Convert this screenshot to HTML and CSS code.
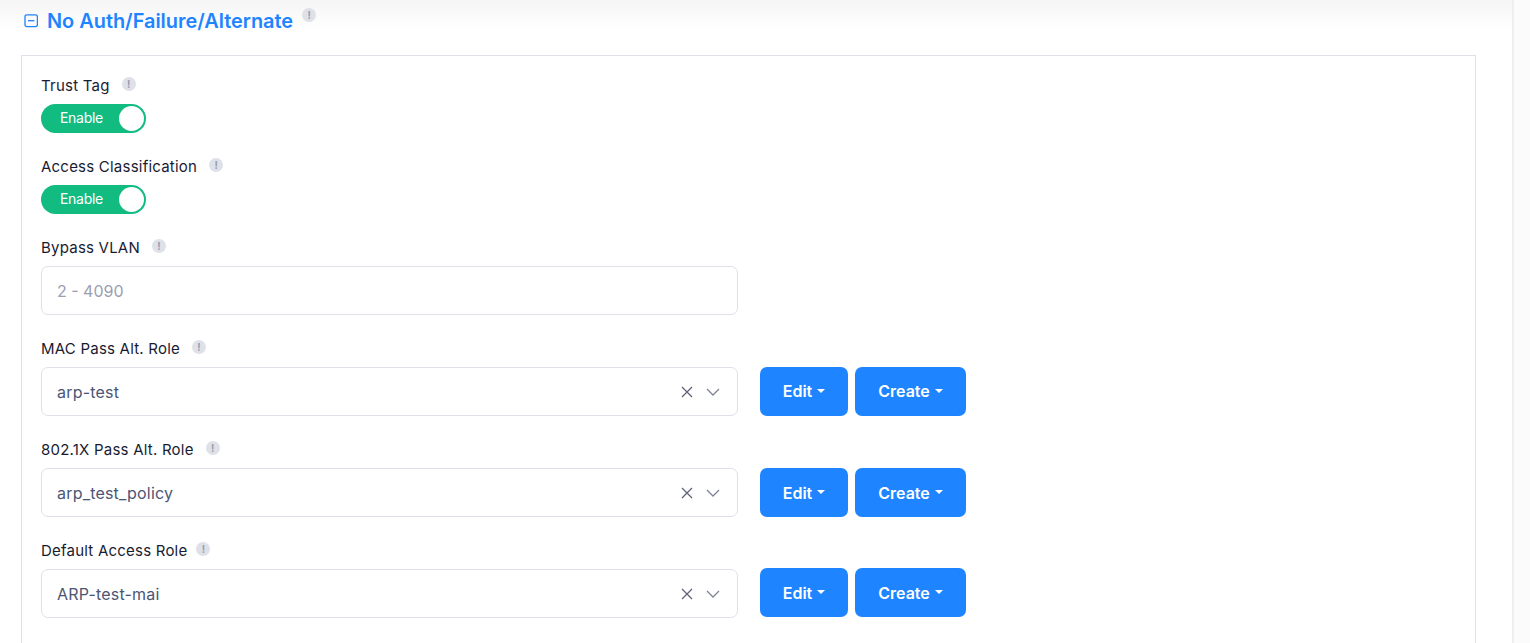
FILE: index.html
```html
<!DOCTYPE html>
<html lang="en">
<head>
<meta charset="utf-8">
<title>No Auth/Failure/Alternate</title>
<link rel="stylesheet" href="styles.css">
</head>
<body>
<div class="page">
  <main class="main">
    <div class="section-head">
      <svg class="collapse" width="14" height="14" viewBox="0 0 14 14"><rect x="1" y="0.8" width="12.4" height="11.8" rx="1.8" fill="none" stroke="#1e84ff" stroke-width="1.3"/><path d="M4 6.7h6.4" stroke="#1e84ff" stroke-width="1.3"/></svg>
      <h2 class="section-title">No Auth/Failure/Alternate</h2>
      <span class="hint hint-title">!</span>
    </div>
    <section class="panel">
      <div class="group group-switch">
        <div class="label-row"><label class="label">Trust Tag</label><span class="hint">!</span></div>
        <div class="switch"><span class="switch-text">Enable</span><span class="knob"></span></div>
      </div>
      <div class="group group-switch">
        <div class="label-row"><label class="label">Access Classification</label><span class="hint">!</span></div>
        <div class="switch"><span class="switch-text">Enable</span><span class="knob"></span></div>
      </div>
      <div class="group">
        <div class="label-row"><label class="label">Bypass VLAN</label><span class="hint">!</span></div>
        <div class="field"><span class="placeholder">2 - 4090</span></div>
      </div>
      <div class="group">
        <div class="label-row"><label class="label">MAC Pass Alt. Role</label><span class="hint">!</span></div>
        <div class="control-row control-row-first">
          <div class="field"><span class="value">arp-test</span>
            <svg class="x" width="12" height="12" viewBox="0 0 12 12"><path d="M1 1l10 10M11 1L1 11" stroke="#5e6278" stroke-width="1.3"/></svg>
            <svg class="chev" width="14" height="8" viewBox="0 0 14 8"><path d="M1 1l6 6 6-6" fill="none" stroke="#7e8299" stroke-width="1.3"/></svg>
          </div>
          <button class="btn btn-edit">Edit<span class="caret"></span></button>
          <button class="btn btn-create">Create<span class="caret"></span></button>
        </div>
      </div>
      <div class="group">
        <div class="label-row"><label class="label">802.1X Pass Alt. Role</label><span class="hint">!</span></div>
        <div class="control-row">
          <div class="field"><span class="value">arp_test_policy</span>
            <svg class="x" width="12" height="12" viewBox="0 0 12 12"><path d="M1 1l10 10M11 1L1 11" stroke="#5e6278" stroke-width="1.3"/></svg>
            <svg class="chev" width="14" height="8" viewBox="0 0 14 8"><path d="M1 1l6 6 6-6" fill="none" stroke="#7e8299" stroke-width="1.3"/></svg>
          </div>
          <button class="btn btn-edit">Edit<span class="caret"></span></button>
          <button class="btn btn-create">Create<span class="caret"></span></button>
        </div>
      </div>
      <div class="group">
        <div class="label-row"><label class="label">Default Access Role</label><span class="hint hint-tight">!</span></div>
        <div class="control-row control-row-up">
          <div class="field"><span class="value">ARP-test-mai</span>
            <svg class="x" width="12" height="12" viewBox="0 0 12 12"><path d="M1 1l10 10M11 1L1 11" stroke="#5e6278" stroke-width="1.3"/></svg>
            <svg class="chev" width="14" height="8" viewBox="0 0 14 8"><path d="M1 1l6 6 6-6" fill="none" stroke="#7e8299" stroke-width="1.3"/></svg>
          </div>
          <button class="btn btn-edit">Edit<span class="caret"></span></button>
          <button class="btn btn-create">Create<span class="caret"></span></button>
        </div>
      </div>
    </section>
  </main>
  <aside class="rail"></aside>
</div>
</body>
</html>
```
FILE: styles.css
```css
* { box-sizing: border-box; }
html, body { margin: 0; height: 100%; overflow: hidden; background: #fff; }
body { font-family: Inter, "Liberation Sans", sans-serif; color: #181c32; }
.page { display: flex; height: 643px; overflow: hidden; }
.main {
  width: 1512px;
  padding: 0 36px 0 21px;
  background: linear-gradient(#f5f5f5 0, #fff 30px);
  background-repeat: no-repeat;
}
.rail { width: 18px; border-left: 2px solid #eeeef3; background: #fbfbfb; }
.section-head { display: flex; align-items: flex-start; height: 55px; padding-top: 9px; padding-left: 3px; }
.collapse { margin-top: 5px; }
.section-title { margin: 0 0 0 9px; font-size: 19.9px; line-height: 24px; font-weight: 600; color: #1e84ff; }
.hint {
  display: flex; align-items: center; justify-content: center;
  width: 14px; height: 14px; border-radius: 50%;
  background: #dfe1e9; color: #989cb0; font-size: 10px; font-weight: 700; line-height: 1;
}
.hint-title { margin: -1px 0 0 9px; }
.panel {
  height: 588px;
  border: 1px solid #dfe0ea;
  border-bottom: 0;
  padding: 20px 19px 0;
}
.group { height: 101px; }
.group-switch { height: 81px; }
.label-row { display: flex; align-items: flex-start; height: 19px; margin-bottom: 9px; }
.label { font-size: 15px; line-height: 19px; font-weight: 400; color: #181c32; letter-spacing: .22px; }
.label-row .hint { margin: 1px 0 0 12px; }
.label-row .hint-tight { margin-left: 9px; }
.switch {
  display: flex; align-items: center; justify-content: space-between;
  width: 105px; height: 29px; border-radius: 15px; background: #12bb7f;
  padding: 0 2px 2px 19px;
}
.switch-text { font-size: 14px; color: #fff; letter-spacing: -.3px; }
.knob { width: 25px; height: 25px; border-radius: 50%; background: #fff; margin-bottom: -2px; }
.control-row { display: flex; align-items: center; }
.control-row-up .btn { transform: translateY(-1px); }
.control-row-first .btn { padding-bottom: 1px; }
.field {
  display: flex; align-items: center;
  width: 697px; height: 49px; border: 1px solid #dfe0ea; border-radius: 7px;
  padding: 0 17px 0 15px; background: #fff;
}
.placeholder { font-size: 16px; color: #9a9eb3; }
.value { font-size: 16px; color: #4b5675; flex: 1; letter-spacing: .2px; }
.x { margin-right: 13px; margin-left: 1px; }
.btn {
  display: flex; align-items: center; justify-content: center;
  height: 49px; border: 0; border-radius: 7px; background: #1e84ff; color: #fff;
  font-family: inherit; font-size: 16px; font-weight: 600; padding: 0;
}
.btn-edit { width: 88px; margin-left: 22px; }
.btn-create { width: 111px; margin-left: 7px; }
.caret {
  width: 0; height: 0; margin-left: 5px; margin-top: -1px;
  border-left: 4px solid transparent; border-right: 4px solid transparent; border-top: 4px solid #fff;
}
```
